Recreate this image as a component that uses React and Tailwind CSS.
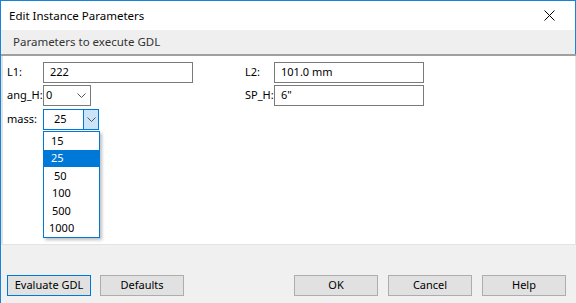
import { useState } from "react";

const FONT = { fontFamily: '"Noto Sans", "Open Sans", sans-serif' };

function TextBox({ value, className = "" }) {
  return (
    <div
      className={`h-[21px] shrink-0 border border-[#7a7a7a] bg-white flex items-center pl-[6px] text-[11px] text-black ${className}`}
    >
      {value}
    </div>
  );
}

function Chevron({ className = "" }) {
  return (
    <svg width="9" height="5" viewBox="0 0 9 5" className={className}>
      <path d="M0.5 0.5 L4.5 4.5 L8.5 0.5" fill="none" stroke="#555" strokeWidth="1" />
    </svg>
  );
}

function Button({ label, focused }) {
  return (
    <button
      className={`block w-[84px] h-[21px] text-[11px] text-black bg-[#e1e1e1] border ${
        focused ? "border-[#0078d7]" : "border-[#adadad]"
      }`}
    >
      {label}
    </button>
  );
}

const options = [
  { v: "15", pad: "pl-[7px]" },
  { v: "25", pad: "pl-[7px]" },
  { v: "50", pad: "pl-[10px]" },
  { v: "100", pad: "pl-[8px]" },
  { v: "500", pad: "pl-[8px]" },
  { v: "1000", pad: "pl-[5px]" },
];

export default function App() {
  const [mass] = useState("25");

  return (
    <div
      style={FONT}
      className="w-[576px] h-[303px] flex flex-col bg-[#f0f0f0] border-l border-[#1883d7] text-black overflow-hidden"
    >
      {/* TITLE */}
      <div className="h-[30px] shrink-0 bg-white border-t border-r border-[#1883d7] flex items-center justify-between pl-[8px] pr-[20px]">
        <span className="text-[11.5px]">Edit Instance Parameters</span>
        <svg width="11" height="11" viewBox="0 0 11 11">
          <path d="M0.5 0.5 L10.5 10.5 M10.5 0.5 L0.5 10.5" stroke="#000" strokeWidth="1" />
        </svg>
      </div>

      {/* SUBHEADER */}
      <div className="h-[24px] shrink-0 bg-[#efefef] border-r border-[#1883d7] flex items-center pl-[12px] text-[11.5px] text-[#333]">
        Parameters to execute GDL
      </div>
      <div className="h-[2px] shrink-0 bg-[#a0a0a0]" />

      {/* PARAMS */}
      <div className="relative h-[189px] shrink-0 bg-white border-l-2 border-b border-r border-[#e3e3e3] pt-[6px] pl-[4px]">
        <div className="grid grid-cols-[238px_180px] gap-y-[2px]">
          <div className="flex items-center h-[21px]">
            <span className="w-[36px] shrink-0 text-[11px]">L1:</span>
            <TextBox value="222" className="w-[150px]" />
          </div>
          <div className="flex items-center h-[21px]">
            <span className="w-[29px] shrink-0 text-[11px]">L2:</span>
            <TextBox value="101.0 mm" className="w-[150px]" />
          </div>

          <div className="flex items-center h-[21px]">
            <span className="w-[36px] shrink-0 whitespace-nowrap text-[11px]">ang_H:</span>
            <div className="w-[48px] h-[21px] shrink-0 border border-[#7a7a7a] bg-white flex items-center justify-between pl-[2px] pr-[4px] text-[11px]">
              0
              <Chevron />
            </div>
          </div>
          <div className="flex items-center h-[21px]">
            <span className="w-[29px] shrink-0 whitespace-nowrap text-[11px]">SP_H:</span>
            <TextBox value={'6"'} className="w-[150px] pl-[2px]" />
          </div>
        </div>

        <div className="flex items-center h-[21px] mt-[3px]">
          <span className="w-[36px] shrink-0 text-[11px]">mass:</span>
          <div className="flex h-[21px] border border-[#0078d7] bg-white">
            <div className="w-[39px] flex items-center pl-[10px] text-[11px]">{mass}</div>
            <div className="w-[15px] bg-[#cce4f7] border-l border-[#0078d7] flex items-center justify-center">
              <Chevron />
            </div>
          </div>
        </div>

        {/* DROPDOWN */}
        <div className="absolute left-[40px] top-[75px] w-[57px] border border-[#0078d7] bg-white shadow-[2px_2px_3px_rgba(0,0,0,0.25)]">
          {options.map((o) => (
            <div
              key={o.v}
              className={`h-[17.5px] flex items-center text-[11px] ${o.pad} ${
                o.v === mass ? "bg-[#0078d7] text-white" : "text-black"
              }`}
            >
              {o.v}
            </div>
          ))}
        </div>
      </div>

      {/* BUTTONS */}
      <div className="flex-1 flex items-start pt-[30px] pl-[6px]">
        <Button label="Evaluate GDL" focused />
        <div className="ml-[9px] flex">
          <Button label="Defaults" />
        </div>
        <div className="ml-[110px] flex gap-[10px]">
          <Button label="OK" />
          <Button label="Cancel" />
          <Button label="Help" />
        </div>
      </div>
    </div>
  );
}
